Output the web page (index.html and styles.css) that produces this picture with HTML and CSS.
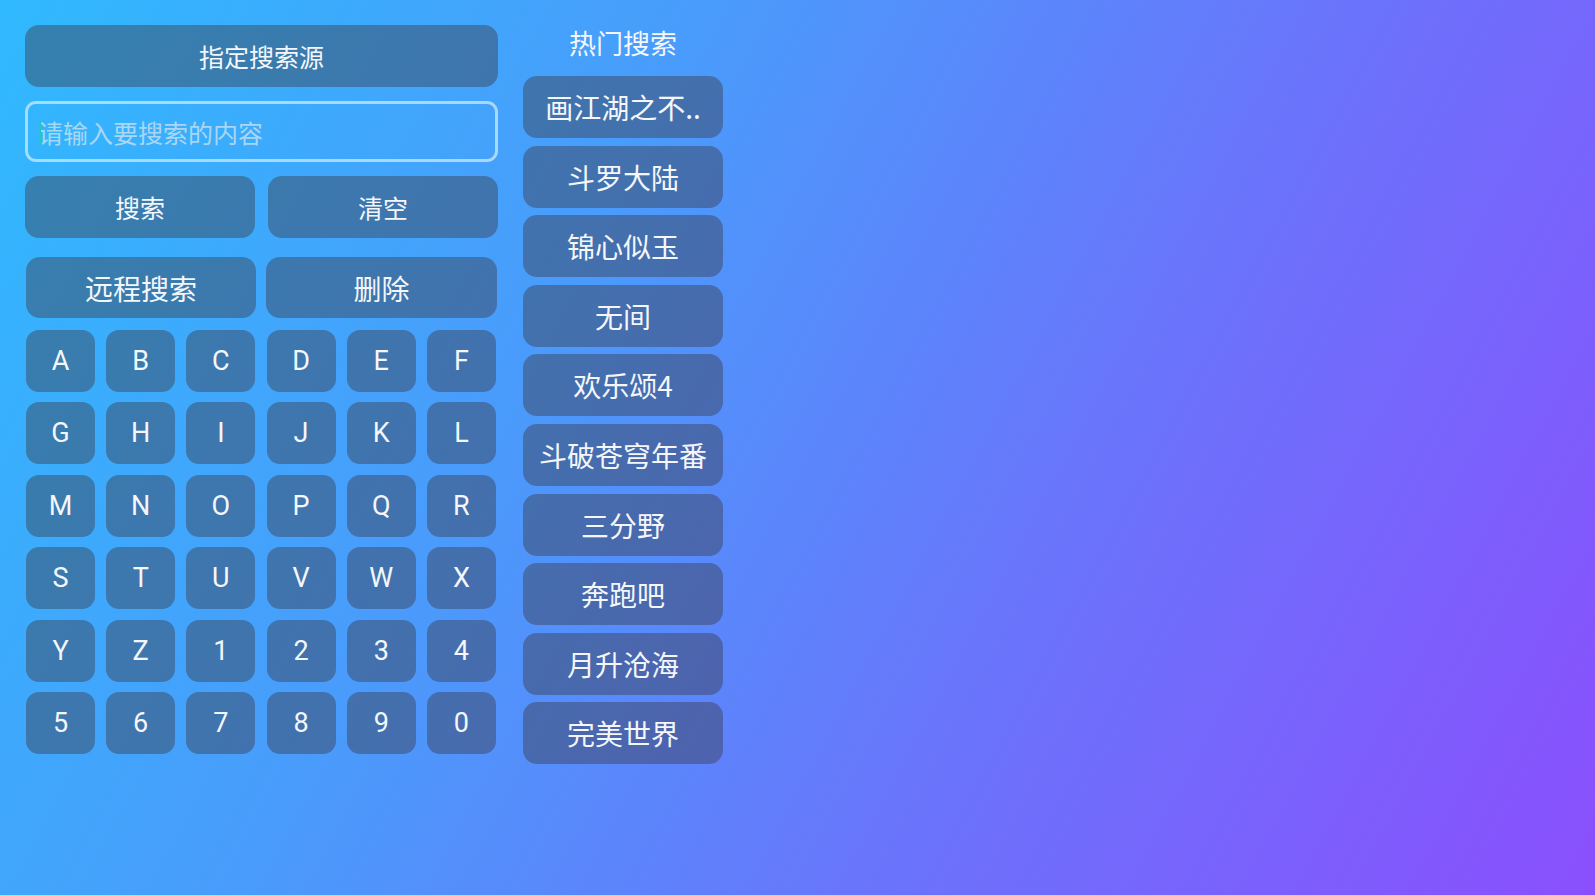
FILE: index.html
```html
<!DOCTYPE html>
<html lang="zh-CN">
<head>
<meta charset="utf-8">
<title>搜索</title>
<link rel="stylesheet" href="styles.css">
</head>
<body>
<div class="page">
  <div class="left">
    <div class="btn btn-wide">指定搜索源</div>
    <div class="input"><span class="cursor"></span><span class="placeholder">请输入要搜索的内容</span></div>
    <div class="row">
      <div class="btn">搜索</div>
      <div class="btn">清空</div>
    </div>
    <div class="row row-big">
      <div class="btn">远程搜索</div>
      <div class="btn">删除</div>
    </div>
    <div class="keys">
      <div class="key">A</div><div class="key">B</div><div class="key">C</div><div class="key">D</div><div class="key">E</div><div class="key">F</div>
      <div class="key">G</div><div class="key">H</div><div class="key">I</div><div class="key">J</div><div class="key">K</div><div class="key">L</div>
      <div class="key">M</div><div class="key">N</div><div class="key">O</div><div class="key">P</div><div class="key">Q</div><div class="key">R</div>
      <div class="key">S</div><div class="key">T</div><div class="key">U</div><div class="key">V</div><div class="key">W</div><div class="key">X</div>
      <div class="key">Y</div><div class="key">Z</div><div class="key">1</div><div class="key">2</div><div class="key">3</div><div class="key">4</div>
      <div class="key">5</div><div class="key">6</div><div class="key">7</div><div class="key">8</div><div class="key">9</div><div class="key">0</div>
    </div>
  </div>
  <div class="hot">
    <div class="hot-title">热门搜索</div>
    <div class="hot-list">
      <div class="hot-item">画江湖之不..</div>
      <div class="hot-item">斗罗大陆</div>
      <div class="hot-item">锦心似玉</div>
      <div class="hot-item">无间</div>
      <div class="hot-item">欢乐颂4</div>
      <div class="hot-item">斗破苍穹年番</div>
      <div class="hot-item">三分野</div>
      <div class="hot-item">奔跑吧</div>
      <div class="hot-item">月升沧海</div>
      <div class="hot-item">完美世界</div>
    </div>
  </div>
</div>
</body>
</html>
```

FILE: styles.css
```css
html, body {
  margin: 0;
  padding: 0;
  width: 100%;
  height: 100%;
}

body {
  background: linear-gradient(118deg, #30b9fe 0%, #4a9bfb 35%, #6a74fb 65%, #8a4ffd 100%);
  font-family: Roboto, "Noto Sans CJK SC", "Noto Sans", sans-serif;
  color: #f4f6fa;
  overflow: hidden;
}

.page {
  display: flex;
  align-items: flex-start;
  gap: 25px;
  padding: 25px 0 0 25px;
}

.left {
  width: 473px;
  display: flex;
  flex-direction: column;
}

.btn {
  height: 62px;
  border-radius: 14px;
  background: rgba(58, 56, 64, 0.42);
  display: flex;
  align-items: center;
  justify-content: center;
  font-size: 25px;
  font-family: "Noto Sans CJK SC", sans-serif;
}

.btn-wide {
  width: 100%;
}

.input {
  margin-top: 14px;
  height: 61px;
  box-sizing: border-box;
  border: 3px solid rgba(200, 235, 255, 0.75);
  border-radius: 11px;
  display: flex;
  align-items: center;
  padding-left: 10px;
  position: relative;
}

.cursor {
  position: absolute;
  left: 11px;
  top: 17px;
  width: 2px;
  height: 24px;
  background: #22c7c2;
}

.placeholder {
  font-family: "Noto Sans CJK SC", sans-serif;
  font-size: 25px;
  color: rgba(215, 230, 240, 0.72);
}

.row {
  margin-top: 14px;
  display: grid;
  grid-template-columns: 230px 230px;
  justify-content: space-between;
}

.row-big {
  margin-top: 19px;
  height: 61px;
  padding: 0 1px;
  grid-template-columns: 230px 231px;
}

.row-big .btn {
  height: 61px;
  font-size: 28px;
}

.keys {
  margin-top: 12px;
  padding: 0 1px;
  display: grid;
  grid-template-columns: repeat(6, 69px);
  grid-auto-rows: 62px;
  column-gap: 11.2px;
  row-gap: 10.4px;
}

.key {
  border-radius: 13px;
  background: rgba(58, 56, 64, 0.42);
  display: flex;
  align-items: center;
  justify-content: center;
  font-family: Roboto, sans-serif;
  font-size: 27px;
}

.hot {
  width: 200px;
  display: flex;
  flex-direction: column;
}

.hot-title {
  height: 36px;
  line-height: 36px;
  text-align: center;
  font-family: "Noto Sans CJK SC", sans-serif;
  font-size: 27px;
}

.hot-list {
  margin-top: 15px;
  display: flex;
  flex-direction: column;
  gap: 7.6px;
}

.hot-item {
  height: 62px;
  border-radius: 14px;
  background: rgba(58, 56, 64, 0.42);
  display: flex;
  align-items: center;
  justify-content: center;
  font-family: "Noto Sans CJK SC", Roboto, sans-serif;
  font-size: 28px;
  white-space: nowrap;
}
```
